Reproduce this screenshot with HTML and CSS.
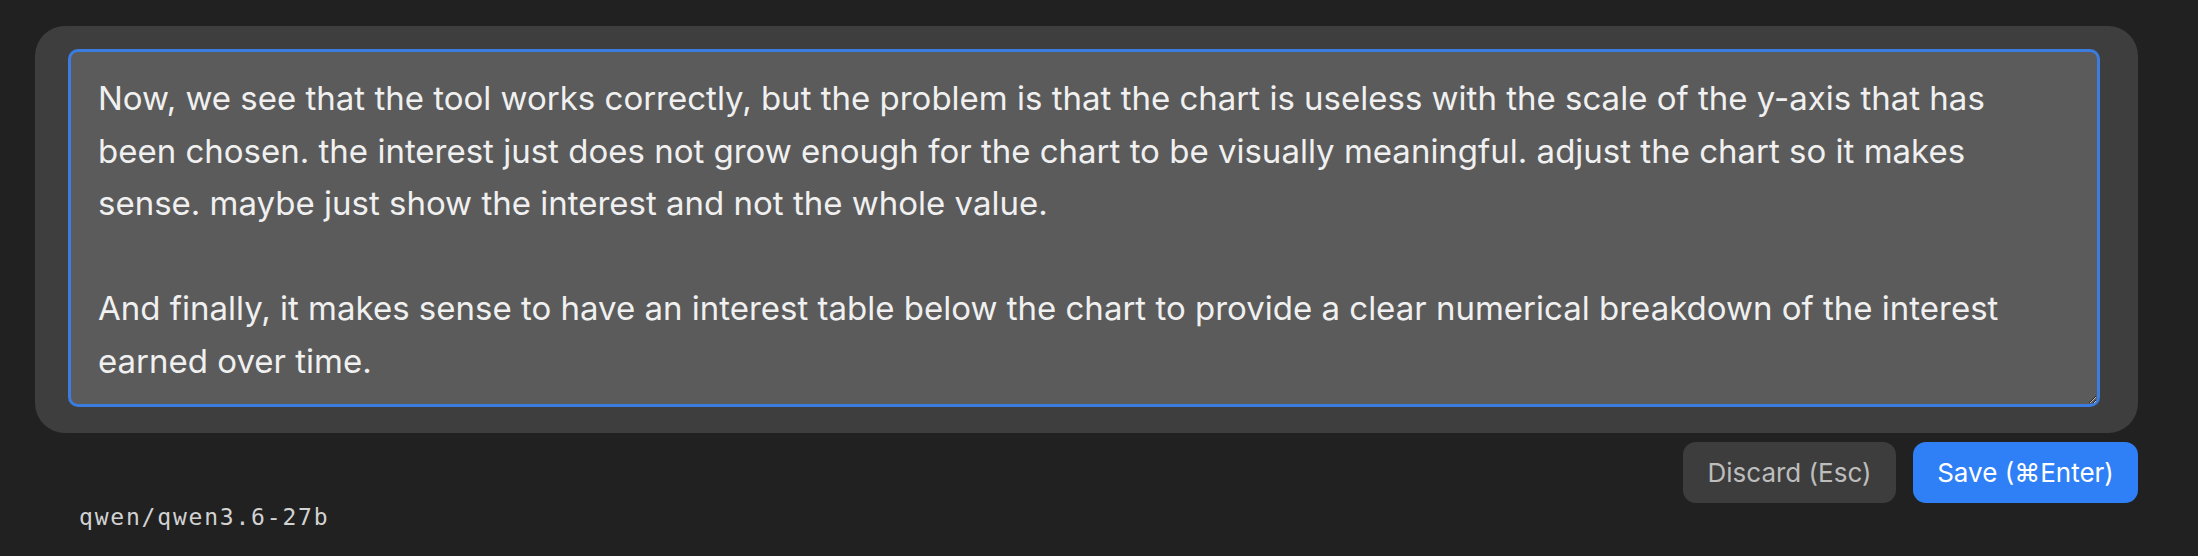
FILE: index.html
```html
<!DOCTYPE html>
<html lang="en">
<head>
    <meta charset="UTF-8">
    <meta name="viewport" content="width=device-width, initial-scale=1.0">
    <title>Edit Prompt</title>
    <link rel="stylesheet" href="styles.css">
</head>
<body>
    <div class="page">
        <!-- prompt editor card -->
        <div class="editor-card">
            <textarea class="prompt-input" id="prompt-input">Now, we see that the tool works correctly, but the problem is that the chart is useless with the scale of the y-axis that has been chosen. the interest just does not grow enough for the chart to be visually meaningful. adjust the chart so it makes sense. maybe just show the interest and not the whole value.

And finally, it makes sense to have an interest table below the chart to provide a clear numerical breakdown of the interest earned over time.</textarea>
        </div>

        <div class="action-buttons">
            <button class="action-button discard-button">Discard (Esc)</button>
            <button class="action-button save-button">Save (&#8984;Enter)</button>
        </div>

        <div class="model-name">qwen/qwen3.6-27b</div>
    </div>
</body>
</html>
```

FILE: styles.css
```css
/* Prompt editor, dark theme */
body {
    margin: 0;
    background-color: #212121;
    font-family: 'Inter', 'Liberation Sans', sans-serif;
}

.page {
    padding: 26px 60px 0 35px;
}

.editor-card {
    background-color: #3e3e3e;
    border-radius: 30px;
    padding: 23px 38px 26px 33px;
}

.prompt-input {
    display: block;
    width: 100%;
    height: 358px;
    box-sizing: border-box;
    margin: 0;
    padding: 20px 27px 16px 27px;
    border: 3px solid #3b7ce0;
    border-radius: 10px;
    background-color: #5b5b5b;
    color: #f0f0f0;
    font-family: 'Inter', 'Liberation Sans', sans-serif;
    font-size: 33px;
    line-height: 52.6px;
    outline: none;
    resize: both;
}

.action-buttons {
    display: flex;
    justify-content: flex-end;
    gap: 17px;
    margin-top: 9px;
}

.action-button {
    height: 61px;
    padding: 0;
    border: none;
    border-radius: 13px;
    font-family: 'Inter', 'Liberation Sans', sans-serif;
    font-size: 26px;
    white-space: nowrap;
    text-align: center;
    cursor: pointer;
}

.discard-button {
    width: 213px;
    background-color: #3d3d3d;
    color: #bdbdbd;
}

.save-button {
    width: 225px;
    background-color: #2f80f7;
    color: white;
}

.model-name {
    margin-top: 1px;
    padding-left: 44px;
    font-family: 'DejaVu Sans Mono', monospace;
    font-size: 23px;
    letter-spacing: 1.8px;
    color: #d2d2d2;
}
```
